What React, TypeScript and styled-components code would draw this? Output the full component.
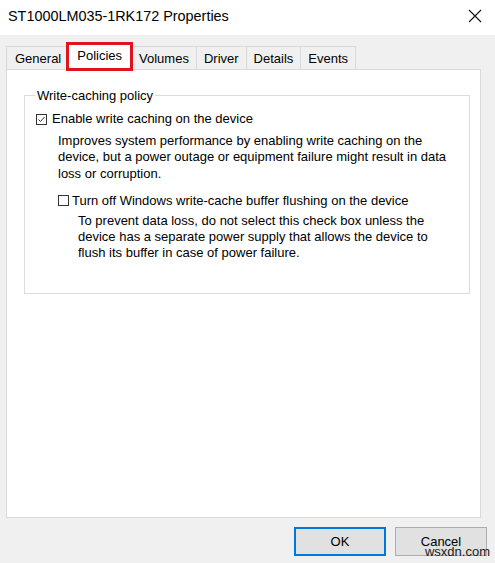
import { createGlobalStyle, styled } from 'styled-components';

const GlobalStyle = createGlobalStyle`
  html, body {
    margin: 0;
    padding: 0;
    background: #f0f0f0;
  }
  body {
    font-family: 'Liberation Sans', Arial, sans-serif;
    font-size: 13px;
    color: #000;
  }
`;

const Window = styled.div`
  width: 495px;
  height: 563px;
  display: flex;
  flex-direction: column;
  background: #f0f0f0;
  position: relative;
  overflow: hidden;
`;

const TitleBar = styled.div`
  height: 35px;
  flex: none;
  background: #fff;
  display: flex;
  align-items: center;
  justify-content: space-between;
  padding: 0 13px 0 8px;
`;

const Title = styled.div`
  font-size: 14.4px;
  margin-top: -3px;
`;

const CloseButton = styled.div`
  width: 14px;
  height: 14px;
  display: flex;
  margin-top: -3px;
`;

const Body = styled.div`
  flex: 1;
  display: flex;
  flex-direction: column;
  padding: 9px 14px 0 6px;
`;

const TabRow = styled.div`
  display: flex;
  align-items: flex-end;
  height: 25px;
`;

const Tab = styled.div<{ $active?: boolean }>`
  height: ${(p) => (p.$active ? '27px' : '23px')};
  padding: 0 ${(p) => (p.$active ? '9px' : '7px')};
  padding-bottom: ${(p) => (p.$active ? '4px' : '0')};
  display: flex;
  align-items: center;
  box-sizing: border-box;
  background: ${(p) => (p.$active ? '#fff' : '#f0f0f0')};
  border: 1px solid #d9d9d9;
  border-bottom: none;
  margin-left: -1px;
  font-size: 13px;
  position: relative;
  z-index: ${(p) => (p.$active ? 2 : 1)};
  margin-bottom: ${(p) => (p.$active ? '-1px' : '0')};
  outline: ${(p) => (p.$active ? '3px solid #e0141e' : 'none')};
  outline-offset: -2px;

  &:first-child {
    margin-left: 0;
    padding-left: 8px;
    padding-right: 6px;
  }
`;

const Panel = styled.div`
  height: 449px;
  background: #fff;
  border: 1px solid #d9d9d9;
  box-sizing: border-box;
  padding: 18px 10px 0 17px;
`;

const GroupBox = styled.fieldset`
  margin: 0;
  border: 1px solid #dcdcdc;
  padding: 1px 10px 0 11px;
  height: 206px;
  box-sizing: border-box;
`;

const Legend = styled.legend`
  padding: 0 2px;
  margin-left: -1px;
`;

const Option = styled.div<{ $indent?: number; $gap?: number }>`
  display: flex;
  flex-direction: column;
  margin-left: ${(p) => p.$indent ?? 0}px;
  margin-top: ${(p) => p.$gap ?? 7}px;
`;

const OptionLabel = styled.label<{ $gap?: number }>`
  display: flex;
  align-items: center;
  gap: ${(p) => p.$gap ?? 5}px;
  line-height: 16px;
`;

const Box = styled.span`
  width: 11px;
  height: 11px;
  border: 1px solid #333;
  box-sizing: border-box;
  display: inline-flex;
  align-items: center;
  justify-content: center;
  background: #fff;
  flex: none;
`;

const Description = styled.p<{ $indent: number; $width: number; $top: number }>`
  margin: ${(p) => p.$top}px 0 0 ${(p) => p.$indent}px;
  line-height: 16.3px;
  max-width: ${(p) => p.$width}px;
`;

const Footer = styled.div`
  height: 44px;
  display: flex;
  justify-content: flex-end;
  align-items: center;
  gap: 9px;
  padding-right: 8px;
  margin-right: -14px;
  margin-top: 1px;
`;

const Button = styled.div<{ $primary?: boolean }>`
  width: 92px;
  height: 29px;
  box-sizing: border-box;
  display: flex;
  align-items: center;
  justify-content: center;
  background: #e1e1e1;
  border: ${(p) => (p.$primary ? '2px solid #0078d7' : '1px solid #adadad')};
  font-size: 13px;
`;

const Watermark = styled.div`
  position: absolute;
  right: 5px;
  bottom: 4px;
  font-size: 13px;
  color: #222;
  line-height: 14px;
`;

function CheckBox({ checked }: { checked?: boolean }) {
  return (
    <Box>
      {checked && (
        <svg width="9" height="9" viewBox="0 0 9 9">
          <path d="M1.5 4.5 L3.5 6.5 L7.5 2" fill="none" stroke="#333" strokeWidth="1" />
        </svg>
      )}
    </Box>
  );
}

export default function App() {
  const tabs = ['General', 'Policies', 'Volumes', 'Driver', 'Details', 'Events'];

  return (
    <>
      <GlobalStyle />
      <Window>
        <TitleBar>
          <Title>ST1000LM035-1RK172 Properties</Title>
          <CloseButton>
            <svg width="14" height="14" viewBox="0 0 14 14">
              <path d="M1 1 L13 13 M13 1 L1 13" stroke="#111" strokeWidth="1.1" />
            </svg>
          </CloseButton>
        </TitleBar>
        <Body>
          <TabRow>
            {tabs.map((t) => (
              <Tab key={t} $active={t === 'Policies'}>
                {t}
              </Tab>
            ))}
          </TabRow>
          <Panel>
            <GroupBox>
              <Legend>Write-caching policy</Legend>
              <Option>
                <OptionLabel>
                  <CheckBox checked />
                  Enable write caching on the device
                </OptionLabel>
                <Description $indent={22} $width={400} $top={6}>
                  Improves system performance by enabling write caching on the
                  device, but a power outage or equipment failure might result in data
                  loss or corruption.
                </Description>
              </Option>
              <Option $indent={22} $gap={11}>
                <OptionLabel $gap={3}>
                  <CheckBox />
                  Turn off Windows write-cache buffer flushing on the device
                </OptionLabel>
                <Description $indent={20} $width={370} $top={4}>
                  To prevent data loss, do not select this check box unless the
                  device has a separate power supply that allows the device to
                  flush its buffer in case of power failure.
                </Description>
              </Option>
            </GroupBox>
          </Panel>
          <Footer>
            <Button $primary>OK</Button>
            <Button>Cancel</Button>
          </Footer>
        </Body>
        <Watermark>wsxdn.com</Watermark>
      </Window>
    </>
  );
}
